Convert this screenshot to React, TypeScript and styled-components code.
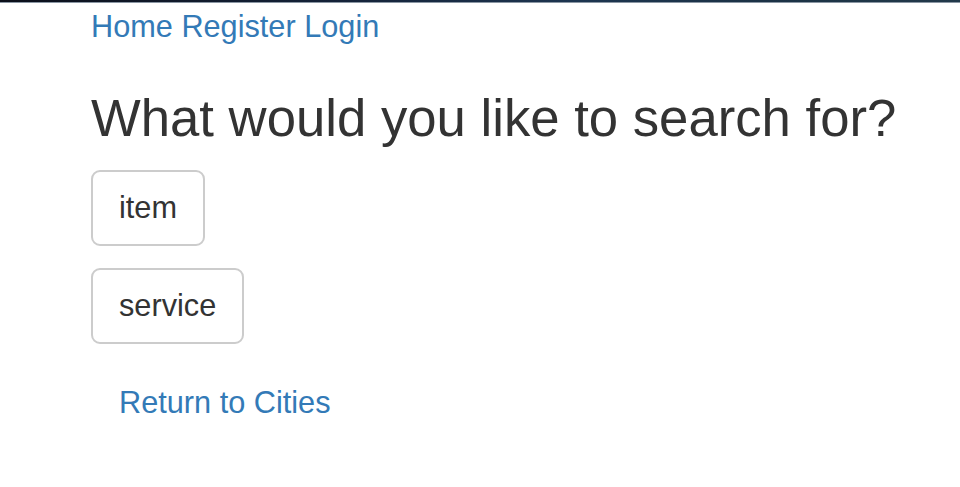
import styled, { createGlobalStyle } from "styled-components";

const GlobalStyle = createGlobalStyle`
  html, body {
    margin: 0;
    padding: 0;
    background: #ffffff;
  }
  body {
    font-family: "Liberation Sans", Arial, sans-serif;
    font-size: 30.7px;
    line-height: 1.42857;
    color: #333333;
  }
`;

const options = ["item", "service"];

export default function App() {
  return (
    <>
      <GlobalStyle />
      <TopStrip />
      <Page>
        <Nav>
          <NavLink href="#">Home</NavLink> <NavLink href="#">Register</NavLink>{" "}
          <NavLink href="#">Login</NavLink>
        </Nav>
        <Title>What would you like to search for?</Title>
        <Choices>
          {options.map((o) => (
            <Choice key={o} type="button">
              {o}
            </Choice>
          ))}
          <LinkButton href="#">Return to Cities</LinkButton>
        </Choices>
      </Page>
    </>
  );
}

const TopStrip = styled.div`
  height: 3px;
  background: linear-gradient(
    90deg,
    #0b0f1a 0%,
    #142238 35%,
    #1d3550 60%,
    #1b3245 80%,
    #22394a 100%
  );
  border-bottom: 1px solid #8a96a3;
  box-sizing: border-box;
`;

const Page = styled.main`
  padding: 0 0 0 91px;
`;

const Nav = styled.nav`
  height: 44px;
  padding-top: 2px;
`;

const NavLink = styled.a`
  color: #337ab7;
  text-decoration: none;
`;

const Title = styled.h1`
  margin: 40px 0 0;
  font-size: 52.7px;
  font-weight: 400;
  line-height: 1.1;
  color: #333333;
`;

const Choices = styled.div`
  display: flex;
  flex-direction: column;
  align-items: flex-start;
  gap: 22px;
  margin-top: 23px;
`;

const Choice = styled.button`
  font-family: inherit;
  font-size: 30.7px;
  line-height: 1.42857;
  color: #333333;
  background: #ffffff;
  border: 2px solid #cccccc;
  border-radius: 9px;
  padding: 14px 26px;
  cursor: pointer;
`;

const LinkButton = styled.a`
  display: inline-block;
  padding: 13px 26px;
  border: 2px solid transparent;
  color: #337ab7;
  text-decoration: none;
`;
